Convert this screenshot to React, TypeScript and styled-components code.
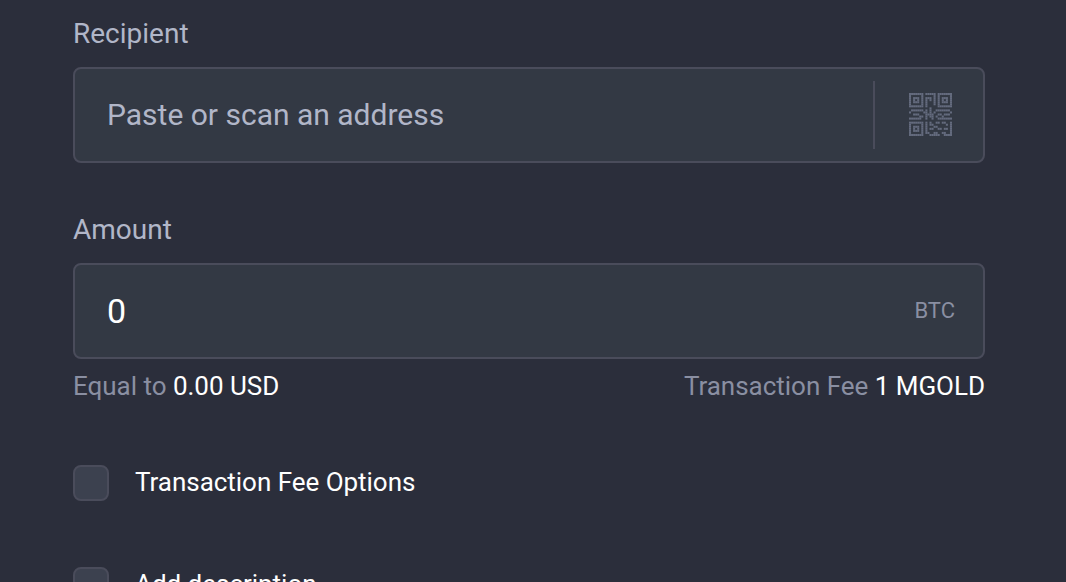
import React from "react"
import styled, { createGlobalStyle } from "styled-components"

const colors = {
  background: "#2b2e3b",
  field: "#333944",
  checkbox: "#3c414f",
  border: "#4a4c5b",
  label: "#b1b6c8",
  muted: "#8a8fa2",
  icon: "#646b7e",
  white: "#ffffff",
}

const qrRows = [
  "111111101111101111111",
  "100000100000101000001",
  "101110101110101011101",
  "101010101010101010101",
  "101110101000101011101",
  "100000101000101000001",
  "111111101000001111111",
  "000000000010000000000",
  "011111101010011111110",
  "100000011010100000001",
  "001110001111001101110",
  "000001101011010010000",
  "111111001001001111111",
  "000000000000000000000",
  "111111101010011011001",
  "100000101011000000101",
  "101110101000110000001",
  "101010101011001101101",
  "101110101000000000001",
  "100000101100110011001",
  "111111100011111001111",
]

const QrIcon = () => (
  <svg width="43" height="43" viewBox="0 0 21 21" fill={colors.icon}>
    {qrRows.map((row, y) =>
      row.split("").map((cell, x) =>
        cell === "1" ? <rect key={`${x}-${y}`} x={x} y={y} width="1" height="1" /> : null
      )
    )}
  </svg>
)

const App = () => (
  <>
    <GlobalStyle />
    <Form>
      <Label>Recipient</Label>
      <Field>
        <Placeholder>Paste or scan an address</Placeholder>
        <ScanButton aria-label="Scan">
          <QrIcon />
        </ScanButton>
      </Field>
      <Label $spaced>Amount</Label>
      <Field>
        <Value>0</Value>
        <Currency>BTC</Currency>
      </Field>
      <Summary>
        <p>Equal to <span>0.00 USD</span></p>
        <p>Transaction Fee <span>1 MGOLD</span></p>
      </Summary>
      <Option>
        <Checkbox />
        <OptionText>Transaction Fee Options</OptionText>
      </Option>
      <Option>
        <Checkbox />
        <OptionText>Add description</OptionText>
      </Option>
    </Form>
  </>
)

const GlobalStyle = createGlobalStyle`
  * {
    box-sizing: border-box;
  }
  body {
    margin: 0;
    height: 582px;
    overflow: hidden;
    background: ${colors.background};
    font-family: Roboto, sans-serif;
  }
`

const Form = styled.div`
  width: 912px;
  height: 582px;
  margin-left: 73px;
  padding-top: 17px;
  overflow: hidden;
`

const Label = styled.div<{ $spaced?: boolean }>`
  height: 32px;
  margin-top: ${({ $spaced }) => ($spaced ? "50px" : "0")};
  margin-bottom: 18px;
  color: ${colors.label};
  font-size: 28px;
  line-height: 33px;
`

const Field = styled.div`
  display: flex;
  align-items: center;
  height: 96px;
  padding-left: 32px;
  background: ${colors.field};
  border: 2px solid ${colors.border};
  border-radius: 8px;
`

const Placeholder = styled.span`
  flex: 1;
  padding-bottom: 2px;
  color: ${colors.label};
  font-size: 30px;
`

const Value = styled(Placeholder)`
  padding-bottom: 0;
  color: ${colors.white};
  font-size: 34px;
`

const ScanButton = styled.button`
  display: flex;
  align-items: center;
  width: 110px;
  height: 68px;
  padding: 0 0 2px 34px;
  background: none;
  border: 0;
  border-left: 2px solid ${colors.border};
`

const Currency = styled.span`
  margin-right: 28px;
  padding-bottom: 2px;
  color: ${colors.muted};
  font-size: 22px;
`

const Summary = styled.div`
  display: flex;
  justify-content: space-between;
  margin-top: 11px;
  margin-bottom: 63px;
  color: ${colors.muted};
  font-size: 26px;
  line-height: 32px;
  letter-spacing: -0.02px;
  p {
    margin: 0;
  }
  span {
    color: ${colors.white};
  }
`

const Option = styled.label`
  display: flex;
  align-items: center;
  height: 36px;
  margin-bottom: 66px;
  color: ${colors.white};
  font-size: 26px;
`

const OptionText = styled.span`
  padding-bottom: 2px;
  letter-spacing: -0.03px;
`

const Checkbox = styled.span`
  width: 36px;
  height: 36px;
  margin-right: 26px;
  background: ${colors.checkbox};
  border: 2px solid ${colors.border};
  border-radius: 8px;
`

export default App
